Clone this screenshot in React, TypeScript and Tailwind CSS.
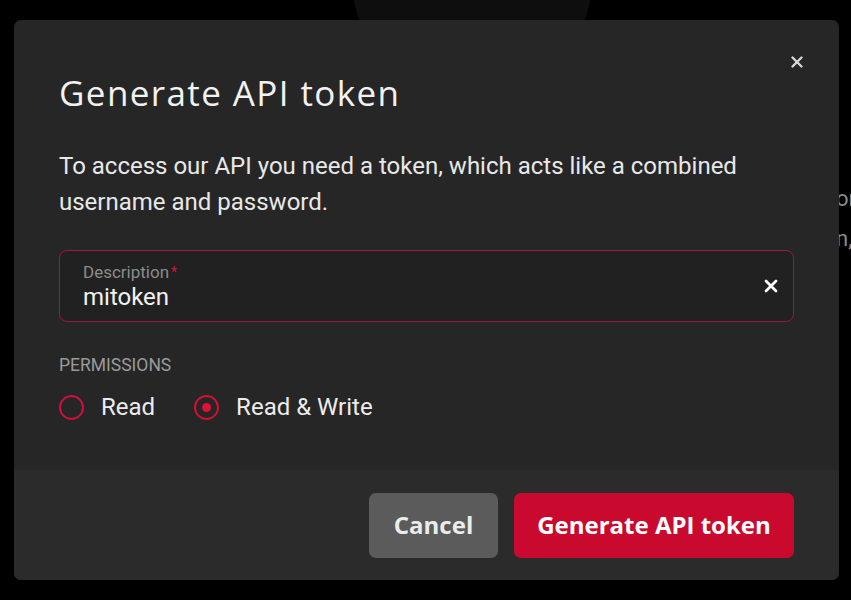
import React, { useState } from 'react';
import { X } from 'lucide-react';

const heading = { fontFamily: '"Open Sans", "Noto Sans", sans-serif' };
const body = { fontFamily: 'Roboto, "Liberation Sans", sans-serif' };

function Radio({ checked, label, onClick }: { checked: boolean; label: string; onClick: () => void }) {
  return (
    <button type="button" onClick={onClick} className="flex items-center gap-[17px]">
      <span className="w-[25px] h-[25px] rounded-full border-[2.5px] border-[#d0103a] flex items-center justify-center">
        {checked && <span className="w-[9px] h-[9px] rounded-full bg-[#e0103a]" />}
      </span>
      <span className="text-[24px] leading-[28px] text-[#ececec]">{label}</span>
    </button>
  );
}

export default function App() {
  const [perm, setPerm] = useState<'read' | 'write'>('write');

  return (
    <div className="relative w-[851px] h-[600px] bg-black overflow-hidden" style={body}>
      {/* page behind the overlay */}
      <div className="absolute left-[352px] top-[-141px] w-[240px] h-[240px] rounded-full bg-[#0e0e0e]" />
      <div className="absolute left-[836px] top-[179px] text-[22px] leading-[40px] text-[#8a8a8a] whitespace-nowrap">
        <div>or</div>
        <div>n,</div>
      </div>

      <div className="absolute left-[14px] top-[20px] w-[825px] h-[560px] rounded-[7px] bg-[#262626] overflow-hidden flex flex-col">
        <button type="button" className="absolute right-[33px] top-[33px] text-[#d6d6d6]">
          <X size={18} strokeWidth={3.2} />
        </button>

        <div className="flex-1 px-[45px] pt-[51px]">
          <h2 className="text-[35px] leading-[44px] text-[#f2f2f2] tracking-[1.4px]" style={heading}>
            Generate API token
          </h2>
          <p className="mt-[33px] text-[24px] leading-[36px] text-[#e8e8e8] w-[720px]">
            To access our API you need a token, which acts like a combined username and password.
          </p>

          <div className="mt-[30px] h-[72px] rounded-[8px] border border-[#9c1a3c] bg-[#212121] pl-[23px] pr-[12px] flex items-center">
            <div className="flex-1 flex flex-col">
              <span className="text-[17px] leading-[22px] text-[#8c8c8c]">
                Description<span className="text-[#d0103a] text-[14px] align-top ml-[2px]">*</span>
              </span>
              <span className="text-[24px] leading-[28px] text-[#f2f2f2]">mitoken</span>
            </div>
            <X size={20} strokeWidth={3.2} className="text-white" />
          </div>

          <div className="mt-[32px] text-[17.5px] leading-[22px] text-[#9a9a9a] uppercase">Permissions</div>
          <div className="mt-[17px] flex items-center gap-[39px]">
            <Radio checked={perm === 'read'} label="Read" onClick={() => setPerm('read')} />
            <Radio checked={perm === 'write'} label="Read & Write" onClick={() => setPerm('write')} />
          </div>
        </div>

        <div className="h-[110px] bg-[#2b2b2b] flex items-center justify-end gap-[16px] px-[45px]">
          <button type="button" className="w-[129px] h-[65px] rounded-[7px] bg-[#5b5b5b] text-[24px] font-bold text-[#ececec]" style={heading}>
            Cancel
          </button>
          <button type="button" className="w-[280px] h-[65px] rounded-[7px] bg-[#c90a2e] text-[24px] font-bold text-white" style={heading}>
            Generate API token
          </button>
        </div>
      </div>
    </div>
  );
}
